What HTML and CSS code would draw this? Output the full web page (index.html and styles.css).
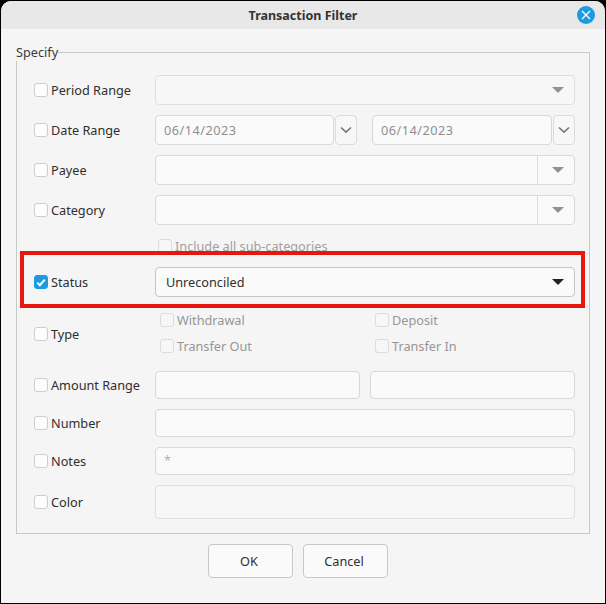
FILE: index.html
```html
<!DOCTYPE html>
<html lang="en">
<head>
    <meta charset="UTF-8">
    <title>Transaction Filter</title>
    <link rel="stylesheet" href="styles.css">
</head>
<body>
    <div class="window">
        <div class="titlebar">
            <span class="title">Transaction Filter</span>
            <span class="close">
                <svg width="10" height="10" viewBox="0 0 10 10"><path d="M1 1L9 9M9 1L1 9" stroke="#fff" stroke-width="1.3" fill="none"/></svg>
            </span>
        </div>
        <div class="content">
            <fieldset class="specify">
                <legend>Specify</legend>

                <div class="row">
                    <label class="check-label"><span class="check"></span>Period Range</label>
                    <div class="field combo disabled"><span class="arrow"></span></div>
                </div>

                <div class="row">
                    <label class="check-label"><span class="check"></span>Date Range</label>
                    <div class="date-pair">
                        <div class="date-group">
                            <div class="field date-input">06/14/2023</div>
                            <div class="date-btn">
                                <svg width="12" height="8" viewBox="0 0 12 8"><path d="M1 1.5L6 6.2L11 1.5" stroke="#777" stroke-width="1.6" fill="none"/></svg>
                            </div>
                        </div>
                        <div class="date-group">
                            <div class="field date-input">06/14/2023</div>
                            <div class="date-btn">
                                <svg width="12" height="8" viewBox="0 0 12 8"><path d="M1 1.5L6 6.2L11 1.5" stroke="#777" stroke-width="1.6" fill="none"/></svg>
                            </div>
                        </div>
                    </div>
                </div>

                <div class="row">
                    <label class="check-label"><span class="check"></span>Payee</label>
                    <div class="field combo split"><span class="arrow"></span></div>
                </div>

                <div class="row">
                    <label class="check-label"><span class="check"></span>Category</label>
                    <div class="field combo split"><span class="arrow"></span></div>
                </div>

                <div class="row row-sub">
                    <label class="sub-option"><span class="check faint"></span>Include all sub-categories</label>
                </div>

                <div class="row row-status">
                    <label class="check-label"><span class="check checked">
                        <svg width="10" height="9" viewBox="0 0 10 9"><path d="M1.2 4.6L3.8 7.2L8.8 1.6" stroke="#fff" stroke-width="2" fill="none"/></svg>
                    </span>Status</label>
                    <div class="field combo active">Unreconciled<span class="arrow dark"></span></div>
                    <div class="highlight"></div>
                </div>

                <div class="row row-type">
                    <label class="check-label"><span class="check"></span>Type</label>
                    <div class="type-grid">
                        <label class="type-option"><span class="check faint"></span>Withdrawal</label>
                        <label class="type-option"><span class="check faint"></span>Deposit</label>
                        <label class="type-option"><span class="check faint"></span>Transfer Out</label>
                        <label class="type-option"><span class="check faint"></span>Transfer In</label>
                    </div>
                </div>

                <div class="row row-short">
                    <label class="check-label"><span class="check"></span>Amount Range</label>
                    <div class="amount-pair">
                        <div class="field"></div>
                        <div class="field"></div>
                    </div>
                </div>

                <div class="row row-short">
                    <label class="check-label"><span class="check"></span>Number</label>
                    <div class="field"></div>
                </div>

                <div class="row row-short">
                    <label class="check-label"><span class="check"></span>Notes</label>
                    <div class="field notes">*</div>
                </div>

                <div class="row row-color">
                    <label class="check-label"><span class="check"></span>Color</label>
                    <div class="field disabled"></div>
                </div>
            </fieldset>

            <div class="actions">
                <button class="btn">OK</button>
                <button class="btn">Cancel</button>
            </div>
        </div>
    </div>
</body>
</html>
```

FILE: styles.css
```css
html, body {
    height: 100%;
}
body {
    margin: 0;
    background: #000;
    font-family: 'Noto Sans', sans-serif;
    font-size: 12.7px;
    color: #2f2f2f;
    overflow: hidden;
}
.window {
    box-sizing: border-box;
    height: 602px;
    margin: 1px;
    background: #f5f5f5;
    border-radius: 10px 10px 0 0;
    overflow: hidden;
}
.titlebar {
    position: relative;
    height: 28px;
    background: #e8e8e8;
    display: flex;
    align-items: center;
    justify-content: center;
}
.title {
    font-weight: 700;
    font-size: 12.5px;
    color: #333;
}
.close {
    position: absolute;
    right: 10px;
    top: 5px;
    width: 18px;
    height: 18px;
    border-radius: 50%;
    background: #1d9ae0;
    display: flex;
    align-items: center;
    justify-content: center;
}
.content {
    padding: 14px 15px 0 15px;
}
.specify {
    box-sizing: border-box;
    height: 491px;
    min-width: 0;
    margin: 0;
    padding: 14px 14px 14px 17px;
    border: 1px solid #c8c8c8;
}
.specify legend {
    padding: 0;
    margin-left: -18px;
    line-height: 18px;
    color: #3a3a3a;
}
.row {
    display: flex;
    align-items: stretch;
    height: 30px;
    margin-bottom: 10px;
}
.row-sub {
    height: 20px;
    margin-top: 11px;
    margin-bottom: 11px;
}
.row-status {
    position: relative;
}
.row-type {
    height: 54px;
}
.row-short {
    height: 28px;
}
.row-color {
    height: 34px;
    margin-bottom: 0;
}
.check-label {
    display: flex;
    align-items: center;
    width: 121px;
    flex: none;
}
.check {
    box-sizing: border-box;
    width: 14px;
    height: 14px;
    margin-right: 3px;
    flex: none;
    border: 1px solid #cdcdcd;
    border-radius: 3px;
    background: #fdfdfd;
    display: flex;
    align-items: center;
    justify-content: center;
}
.check.faint {
    border-color: #dcdcdc;
    background: #f7f7f7;
}
.check.checked {
    border-color: #1d9ae0;
    background: #1d9ae0;
}
.field {
    box-sizing: border-box;
    flex: 1;
    min-width: 0;
    position: relative;
    display: flex;
    align-items: center;
    padding: 0 10px;
    background: #fafafa;
    border: 1px solid #d8d8d8;
    border-radius: 4px;
}
.field.disabled {
    background: #f7f7f7;
    border-color: #dfdfdf;
}
.combo.active {
    border-color: #c6c6c6;
}
.arrow {
    position: absolute;
    right: 10px;
    top: 11px;
    width: 0;
    height: 0;
    border-left: 6px solid transparent;
    border-right: 6px solid transparent;
    border-top: 6px solid #929292;
}
.arrow.dark {
    border-top-color: #222;
}
.split::before {
    content: "";
    position: absolute;
    right: 36px;
    top: 0;
    bottom: 0;
    border-left: 1px solid #dcdcdc;
}
.date-pair {
    flex: 1;
    display: flex;
    justify-content: space-between;
}
.date-group {
    display: flex;
    width: 202px;
    gap: 1px;
}
.date-group + .date-group {
    width: 203px;
}
.date-input {
    padding-left: 8px;
    color: #8f8f8f;
    letter-spacing: 0.5px;
}
.date-btn {
    box-sizing: border-box;
    width: 22px;
    flex: none;
    display: flex;
    align-items: center;
    justify-content: center;
    background: #f7f7f7;
    border: 1px solid #dcdcdc;
    border-radius: 4px;
}
.sub-option {
    display: flex;
    align-items: center;
    margin-left: 124px;
    color: #a0a0a0;
}
.type-grid {
    flex: 1;
    display: grid;
    grid-template-columns: 215px 1fr;
    grid-auto-rows: 26px;
    padding-left: 5px;
}
.type-option {
    display: flex;
    align-items: center;
    color: #969696;
}
.amount-pair {
    flex: 1;
    display: flex;
    gap: 10px;
}
.notes {
    color: #b4b4b4;
    padding-left: 8px;
    padding-bottom: 3px;
}
.highlight {
    position: absolute;
    left: -14px;
    right: -10px;
    top: -16px;
    bottom: -11px;
    border: 4px solid #e5170f;
    pointer-events: none;
}
.actions {
    display: flex;
    justify-content: center;
    gap: 10px;
    margin-top: 10px;
    padding-right: 10px;
}
.btn {
    box-sizing: border-box;
    width: 85px;
    height: 34px;
    padding: 0 3px 0 0;
    background: #fafafa;
    border: 1px solid #c8c8c8;
    border-radius: 4px;
    font: inherit;
    color: #2f2f2f;
}
```
